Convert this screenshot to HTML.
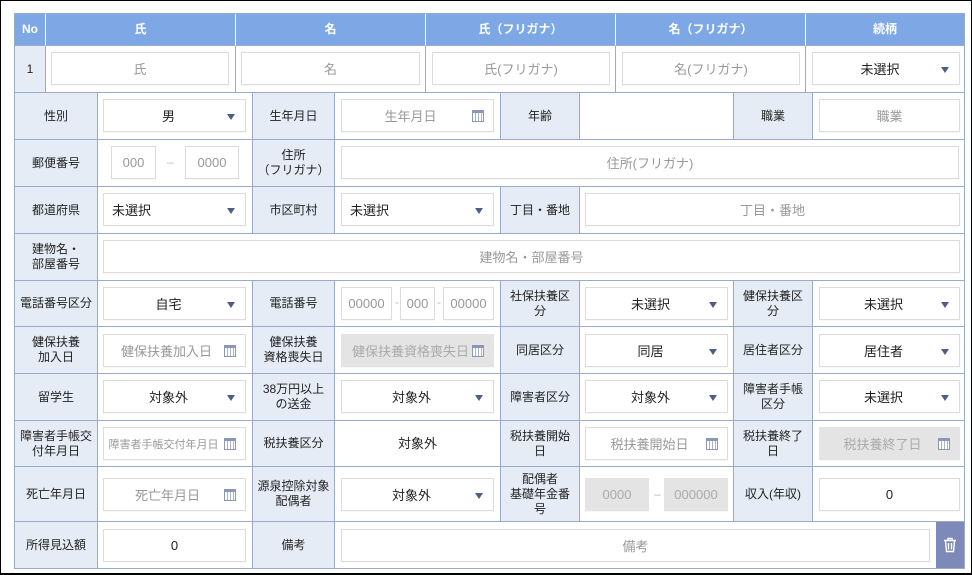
<!DOCTYPE html><html><head><meta charset="utf-8"><style>
*{box-sizing:border-box;margin:0;padding:0}
body{width:972px;height:575px;background:#fff;font-family:"Liberation Sans","Noto Sans CJK JP",sans-serif;position:relative;overflow:hidden}
.fr{position:absolute;left:0;top:0;width:972px;height:575px;border:1px solid #000;border-bottom-width:2px}
.c{position:absolute;border-right:1px solid #9aabc9;border-bottom:1px solid #9aabc9;display:flex;align-items:center;justify-content:center;text-align:center;font-size:12px;color:#222;line-height:15px}
.l{background:#e6ecf6}
.h{background:#7ea8e5;color:#fff;font-weight:bold;border-right:1px solid #fff;border-bottom:1px solid #9aabc9}
.in{position:absolute;border:1px solid #dcdcdc;background:#fff;height:33px;font-size:13px;color:#999;display:flex;align-items:center;justify-content:center;box-shadow:0 1px 1px rgba(0,0,0,.04)}
.v{color:#222}
.g{background:#e4e4e4;border-color:#e4e4e4;color:#aaa}
.ar{position:absolute;right:10px;top:14px;width:0;height:0;border-left:4px solid transparent;border-right:4px solid transparent;border-top:6px solid #4f5d86}
.cal{position:absolute;right:9px;top:10px;width:12px;height:12px;border:1px solid #8b97b8;border-top-width:3px;background:repeating-linear-gradient(90deg,#fff 0 2px,#aab3cc 2px 3px)}
.d{position:absolute;color:#bbb;font-size:12px}
</style></head><body>
<div class="fr"></div>
<div style="position:absolute;left:14px;top:13px;width:951px;height:556px;border-left:1px solid #9aabc9;border-top:1px solid #9aabc9"></div>
<div class="c h" style="left:15px;top:14px;width:31px;height:32px">No</div>
<div class="c h" style="left:46px;top:14px;width:190px;height:32px">氏</div>
<div class="c h" style="left:236px;top:14px;width:190px;height:32px">名</div>
<div class="c h" style="left:426px;top:14px;width:190px;height:32px">氏（フリガナ）</div>
<div class="c h" style="left:616px;top:14px;width:190px;height:32px">名（フリガナ）</div>
<div class="c h" style="left:806px;top:14px;width:159px;height:32px;border-right:1px solid #9aabc9">続柄</div>
<div class="c l" style="left:15px;top:46px;width:31px;height:47px">1</div>
<div class="c" style="left:46px;top:46px;width:190px;height:47px"></div>
<div class="c" style="left:236px;top:46px;width:190px;height:47px"></div>
<div class="c" style="left:426px;top:46px;width:190px;height:47px"></div>
<div class="c" style="left:616px;top:46px;width:190px;height:47px"></div>
<div class="c" style="left:806px;top:46px;width:159px;height:47px"></div>
<div class="in" style="left:51px;top:52px;width:178px">氏</div>
<div class="in" style="left:241px;top:52px;width:179px">名</div>
<div class="in" style="left:432px;top:52px;width:178px">氏(フリガナ)</div>
<div class="in" style="left:622px;top:52px;width:178px">名(フリガナ)</div>
<div class="in v" style="left:812px;top:52px;width:148px;padding-right:12px">未選択<span class="ar"></span></div>

<div class="c l" style="left:15px;top:93px;width:83px;height:47px">性別</div>
<div class="c" style="left:98px;top:93px;width:155px;height:47px"></div>
<div class="c l" style="left:253px;top:93px;width:82px;height:47px">生年月日</div>
<div class="c" style="left:335px;top:93px;width:166px;height:47px"></div>
<div class="c l" style="left:501px;top:93px;width:79px;height:47px">年齢</div>
<div class="c" style="left:580px;top:93px;width:154px;height:47px"></div>
<div class="c l" style="left:734px;top:93px;width:79px;height:47px">職業</div>
<div class="c" style="left:813px;top:93px;width:152px;height:47px"></div>
<div class="in v" style="left:103px;top:99px;width:143px;padding-right:12px">男<span class="ar"></span></div>
<div class="in" style="left:341px;top:99px;width:153px;padding-right:14px">生年月日<span class="cal"></span></div>
<div class="in" style="left:819px;top:99px;width:141px">職業</div>

<div class="c l" style="left:15px;top:140px;width:83px;height:47px">郵便番号</div>
<div class="c" style="left:98px;top:140px;width:155px;height:47px"></div>
<div class="c l" style="left:253px;top:140px;width:82px;height:47px">住所<br>（フリガナ）</div>
<div class="c" style="left:335px;top:140px;width:630px;height:47px"></div>
<div class="in" style="left:111px;top:146px;width:45px">000</div>
<span class="d" style="left:167px;top:155px">–</span>
<div class="in" style="left:185px;top:146px;width:54px">0000</div>
<div class="in" style="left:341px;top:146px;width:618px">住所(フリガナ)</div>

<div class="c l" style="left:15px;top:187px;width:83px;height:47px">都道府県</div>
<div class="c" style="left:98px;top:187px;width:155px;height:47px"></div>
<div class="c l" style="left:253px;top:187px;width:82px;height:47px">市区町村</div>
<div class="c" style="left:335px;top:187px;width:166px;height:47px"></div>
<div class="c l" style="left:501px;top:187px;width:79px;height:47px">丁目・番地</div>
<div class="c" style="left:580px;top:187px;width:385px;height:47px"></div>
<div class="in v" style="left:103px;top:193px;width:143px;justify-content:flex-start;padding-left:8px">未選択<span class="ar"></span></div>
<div class="in v" style="left:341px;top:193px;width:153px;justify-content:flex-start;padding-left:8px">未選択<span class="ar"></span></div>
<div class="in" style="left:585px;top:193px;width:375px">丁目・番地</div>

<div class="c l" style="left:15px;top:234px;width:83px;height:47px">建物名・<br>部屋番号</div>
<div class="c" style="left:98px;top:234px;width:867px;height:47px"></div>
<div class="in" style="left:103px;top:240px;width:857px">建物名・部屋番号</div>

<div class="c l" style="left:15px;top:281px;width:83px;height:46px">電話番号区分</div>
<div class="c" style="left:98px;top:281px;width:155px;height:46px"></div>
<div class="c l" style="left:253px;top:281px;width:82px;height:46px">電話番号</div>
<div class="c" style="left:335px;top:281px;width:166px;height:46px"></div>
<div class="c l" style="left:501px;top:281px;width:79px;height:46px">社保扶養区<br>分</div>
<div class="c" style="left:580px;top:281px;width:154px;height:46px"></div>
<div class="c l" style="left:734px;top:281px;width:79px;height:46px">健保扶養区<br>分</div>
<div class="c" style="left:813px;top:281px;width:152px;height:46px"></div>
<div class="in v" style="left:103px;top:287px;width:143px;padding-right:12px">自宅<span class="ar"></span></div>
<div class="in" style="left:341px;top:287px;width:51px">00000</div>
<span class="d" style="left:395px;top:295px">-</span>
<div class="in" style="left:400px;top:287px;width:35px;overflow:hidden">000</div>
<span class="d" style="left:437px;top:295px">-</span>
<div class="in" style="left:443px;top:287px;width:51px">00000</div>
<div class="in v" style="left:585px;top:287px;width:143px;padding-right:12px">未選択<span class="ar"></span></div>
<div class="in v" style="left:819px;top:287px;width:141px;padding-right:12px">未選択<span class="ar"></span></div>

<div class="c l" style="left:15px;top:327px;width:83px;height:47px">健保扶養<br>加入日</div>
<div class="c" style="left:98px;top:327px;width:155px;height:47px"></div>
<div class="c l" style="left:253px;top:327px;width:82px;height:47px">健保扶養<br>資格喪失日</div>
<div class="c" style="left:335px;top:327px;width:166px;height:47px"></div>
<div class="c l" style="left:501px;top:327px;width:79px;height:47px">同居区分</div>
<div class="c" style="left:580px;top:327px;width:154px;height:47px"></div>
<div class="c l" style="left:734px;top:327px;width:79px;height:47px">居住者区分</div>
<div class="c" style="left:813px;top:327px;width:152px;height:47px"></div>
<div class="in" style="left:103px;top:334px;width:143px;padding-right:16px">健保扶養加入日<span class="cal"></span></div>
<div class="in g" style="left:341px;top:334px;width:153px;padding-right:14px">健保扶養資格喪失日<span class="cal"></span></div>
<div class="in v" style="left:585px;top:334px;width:143px;padding-right:12px">同居<span class="ar"></span></div>
<div class="in v" style="left:819px;top:334px;width:141px;padding-right:12px">居住者<span class="ar"></span></div>

<div class="c l" style="left:15px;top:374px;width:83px;height:47px">留学生</div>
<div class="c" style="left:98px;top:374px;width:155px;height:47px"></div>
<div class="c l" style="left:253px;top:374px;width:82px;height:47px">38万円以上<br>の送金</div>
<div class="c" style="left:335px;top:374px;width:166px;height:47px"></div>
<div class="c l" style="left:501px;top:374px;width:79px;height:47px">障害者区分</div>
<div class="c" style="left:580px;top:374px;width:154px;height:47px"></div>
<div class="c l" style="left:734px;top:374px;width:79px;height:47px">障害者手帳<br>区分</div>
<div class="c" style="left:813px;top:374px;width:152px;height:47px"></div>
<div class="in v" style="left:103px;top:380px;width:143px;padding-right:12px">対象外<span class="ar"></span></div>
<div class="in v" style="left:341px;top:380px;width:153px;padding-right:12px">対象外<span class="ar"></span></div>
<div class="in v" style="left:585px;top:380px;width:143px;padding-right:12px">対象外<span class="ar"></span></div>
<div class="in v" style="left:819px;top:380px;width:141px;padding-right:12px">未選択<span class="ar"></span></div>

<div class="c l" style="left:15px;top:421px;width:83px;height:46px">障害者手帳交<br>付年月日</div>
<div class="c" style="left:98px;top:421px;width:155px;height:46px"></div>
<div class="c l" style="left:253px;top:421px;width:82px;height:46px">税扶養区分</div>
<div class="c" style="left:335px;top:421px;width:166px;height:46px;font-size:13px">対象外</div>
<div class="c l" style="left:501px;top:421px;width:79px;height:46px">税扶養開始<br>日</div>
<div class="c" style="left:580px;top:421px;width:154px;height:46px"></div>
<div class="c l" style="left:734px;top:421px;width:79px;height:46px">税扶養終了<br>日</div>
<div class="c" style="left:813px;top:421px;width:152px;height:46px"></div>
<div class="in" style="left:103px;top:427px;width:143px;padding-right:22px;font-size:11px">障害者手帳交付年月日<span class="cal"></span></div>
<div class="in" style="left:585px;top:427px;width:143px;padding-right:14px">税扶養開始日<span class="cal"></span></div>
<div class="in g" style="left:819px;top:427px;width:141px;padding-right:14px">税扶養終了日<span class="cal"></span></div>

<div class="c l" style="left:15px;top:467px;width:83px;height:55px">死亡年月日</div>
<div class="c" style="left:98px;top:467px;width:155px;height:55px"></div>
<div class="c l" style="left:253px;top:467px;width:82px;height:55px">源泉控除対象<br>配偶者</div>
<div class="c" style="left:335px;top:467px;width:166px;height:55px"></div>
<div class="c l" style="left:501px;top:467px;width:79px;height:55px">配偶者<br>基礎年金番<br>号</div>
<div class="c" style="left:580px;top:467px;width:154px;height:55px"></div>
<div class="c l" style="left:734px;top:467px;width:79px;height:55px">収入(年収)</div>
<div class="c" style="left:813px;top:467px;width:152px;height:55px"></div>
<div class="in" style="left:103px;top:478px;width:143px;padding-right:14px">死亡年月日<span class="cal"></span></div>
<div class="in v" style="left:341px;top:478px;width:153px;padding-right:12px">対象外<span class="ar"></span></div>
<div class="in g" style="left:585px;top:478px;width:64px">0000</div>
<span class="d" style="left:654px;top:487px">–</span>
<div class="in g" style="left:664px;top:478px;width:64px">000000</div>
<div class="in v" style="left:819px;top:478px;width:141px">0</div>

<div class="c l" style="left:15px;top:522px;width:83px;height:47px">所得見込額</div>
<div class="c" style="left:98px;top:522px;width:155px;height:47px"></div>
<div class="c l" style="left:253px;top:522px;width:82px;height:47px">備考</div>
<div class="c" style="left:335px;top:522px;width:630px;height:47px"></div>
<div class="in v" style="left:103px;top:529px;width:143px">0</div>
<div class="in" style="left:341px;top:529px;width:589px">備考</div>
<div style="position:absolute;left:936px;top:522px;width:28px;height:46px;background:#7d8ab9;display:flex;align-items:center;justify-content:center">
<svg width="14" height="16" viewBox="0 0 14 16" fill="none" stroke="#fff" stroke-width="1.4"><path d="M1 3.5h12M5 3.5V1.5h4v2M2.5 3.5l1 11h7l1-11M5.5 6v6.5M8.5 6v6.5"/></svg></div>
</body></html>
